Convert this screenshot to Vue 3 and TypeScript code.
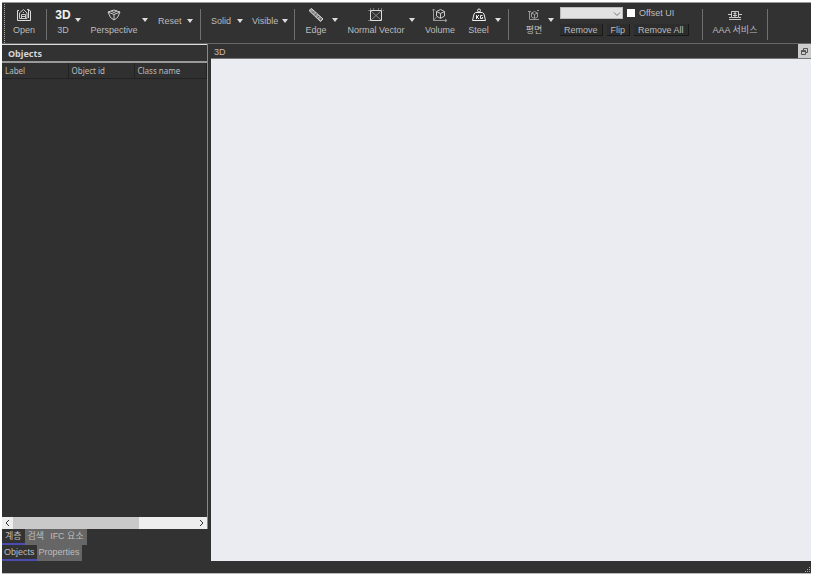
<script setup lang="ts">
import { ref } from 'vue'

const plane = ref('')
const offsetUi = ref(false)
const columns: string[] = ['Label', 'Object id', 'Class name']
const viewTabs: string[] = ['계층', '검색', 'IFC 요소']
const panelTabs: string[] = ['Objects', 'Properties']
const activeView = ref('계층')
const activePanel = ref('Objects')
</script>

<template>
  <div class="page">
    <div class="window">
      <header class="toolbar">
        <span class="grip"></span>
        <div class="group first">
          <button class="tool open">
            <svg width="16" height="14" viewBox="0 0 16 14" fill="none" stroke="#ddd">
              <path d="M3 2.500H1.500V12.500H14.500V10" />
              <path d="M3.500 10.500V5L7.500 1.500L11 5V10.500ZM5.500 10V6.500H9.500V10M5.500 8.500H9.500M7.500 4V5" stroke="#c8c8c8" />
              <path d="M11 1.500H12.500V10M12.500 1.500L14.500 3V10.500" />
            </svg>
            <span>Open</span>
          </button>
        </div>
        <div class="group">
          <button class="tool three"><b class="big">3D</b><span>3D</span></button>
          <button class="drop" aria-label="3D options"><i class="arrow"></i></button>
          <button class="tool perspective">
            <svg width="14" height="14" viewBox="0 0 14 14" fill="none" stroke="#ccc">
              <path d="M1 4L7 2L13 4L10.500 9.500L7 12L3.500 9.500ZM1 4L7 6.500L13 4M7 6.500V12M4 3L7 4.500L10 3" />
            </svg>
            <span>Perspective</span>
          </button>
          <button class="drop after-wide" aria-label="Perspective options"><i class="arrow"></i></button>
          <button class="plain reset">Reset <i class="arrow"></i></button>
        </div>
        <div class="group">
          <button class="plain solid">Solid <i class="arrow"></i></button>
          <button class="plain visible">Visible <i class="arrow"></i></button>
        </div>
        <div class="group">
          <button class="tool edge">
            <svg width="16" height="14" viewBox="0 0 16 14" fill="none">
              <path d="M1 2.500L3.500 0.500L15 11L12.500 13.500Z" fill="#999" stroke="#ddd" />
              <path d="M4.500 5L6 3.500M7 7.500L8.500 5.500M9.500 9.500L11 8M12 12L13.500 10" stroke="#555" />
            </svg>
            <span>Edge</span>
          </button>
          <button class="drop" aria-label="Edge options"><i class="arrow"></i></button>
          <button class="tool normal">
            <svg width="16" height="14" viewBox="0 0 16 14" fill="none">
              <path d="M3 3L13 12M13 3L3 12" stroke="#888" />
              <path d="M0 2.500H3M0 12.500H3M2.500 0V2M13.500 0V2M5.500 0V2M10.500 0V2M15 2.500H16" stroke="#777" />
              <path d="M2.500 2.500H13.500V12.500H2.500Z" stroke="#ddd" />
            </svg>
            <span>Normal Vector</span>
          </button>
          <button class="drop" aria-label="Normal vector options"><i class="arrow"></i></button>
          <button class="tool volume">
            <svg width="16" height="14" viewBox="0 0 16 14" fill="none" stroke="#ccc">
              <path d="M4.500 3.500L8.500 1.500L12.500 3.500V8L8.500 10.500L4.500 8ZM4.500 3.500L8.500 5.500L12.500 3.500M8.500 5.500V10" />
              <path d="M1.500 1V12.500H15M0 2.500L1.500 1L3 2.500M13 11L15 12.500L13 14M1.500 12.500L4.500 9" stroke="#999" />
            </svg>
            <span>Volume</span>
          </button>
          <button class="tool steel">
            <svg width="16" height="14" viewBox="0 0 16 14" fill="none" stroke="#eee">
              <circle cx="8" cy="2.500" r="1.500" />
              <path d="M4.500 4.500H11.500L13 6L14.500 12.500H1.500L3 6Z" />
              <path d="M5.500 7V11M8 7L6 9L8 11M11.500 7.500H9.500V10.500H11.500V9" />
            </svg>
            <span>Steel</span>
          </button>
          <button class="drop" aria-label="Steel options"><i class="arrow"></i></button>
        </div>
        <div class="group">
          <button class="tool plane">
            <svg width="12" height="14" viewBox="0 0 12 14" fill="none" stroke="#999">
              <path d="M3.500 5L6.500 3.500L9.500 5V9L6.500 10.500L3.500 9ZM3.500 5L6.500 6.500L9.500 5M6.500 6.500V10M1.500 3V11.500H11M0 3.500H3M9 2.500H11" />
            </svg>
            <span>평면</span>
          </button>
          <button class="drop" aria-label="평면 options"><i class="arrow"></i></button>
          <div class="clip">
            <div class="clip-row">
              <span class="combo">
                <select v-model="plane" aria-label="평면"><option value=""></option></select>
                <svg width="8" height="6" viewBox="0 0 8 6" fill="none" stroke="#777"><path d="M1 1.500L4 4.500L7 1.500" /></svg>
              </span>
              <label><input v-model="offsetUi" type="checkbox" />Offset UI</label>
            </div>
            <div class="clip-row actions">
              <button>Remove</button><button>Flip</button><button>Remove All</button>
            </div>
          </div>
        </div>
        <div class="group">
          <button class="tool service">
            <svg width="14" height="14" viewBox="0 0 14 14" fill="none" stroke="#ccc">
              <path d="M3.500 3.500H10.500V9.500H3.500ZM1 11.500H13M1 9.500H3M11 9.500H13M0 6.500H3M11 6.500H14M5.500 5.500H8.500M7 4V9M5 7.500H9" />
            </svg>
            <span>AAA 서비스</span>
          </button>
        </div>
      </header>

      <main class="body">
        <aside class="side">
          <div class="panel">
            <h2>Objects</h2>
            <div class="list">
              <table>
                <thead><tr><th v-for="c in columns" :key="c">{{ c }}</th></tr></thead>
              </table>
            </div>
            <div class="scroll">
              <button aria-label="Scroll left"><svg width="5" height="8" viewBox="0 0 5 8"><path d="M4 1L1 4L4 7" /></svg></button>
              <div class="track"><div class="thumb"></div></div>
              <button aria-label="Scroll right"><svg width="5" height="8" viewBox="0 0 5 8"><path d="M1 1L4 4L1 7" /></svg></button>
            </div>
          </div>
          <nav class="tabs">
            <button v-for="t in viewTabs" :key="t" :class="{ active: t === activeView }" @click="activeView = t">{{ t }}</button>
          </nav>
          <nav class="tabs">
            <button v-for="t in panelTabs" :key="t" :class="{ active: t === activePanel }" @click="activePanel = t">{{ t }}</button>
          </nav>
        </aside>
        <section class="view">
          <div class="view-title">
            <span>3D</span>
            <button aria-label="Restore">
              <svg width="7" height="7" viewBox="0 0 7 7" fill="none" stroke="#555"><path d="M2.500 2V.5H6.500V4.500H5M.5 2.500H4.500V6.500H.5ZM.5 3.500H4.500" /></svg>
            </button>
          </div>
          <div class="canvas"></div>
        </section>
      </main>
      <footer class="status">
        <svg width="6" height="6" viewBox="0 0 6 6" fill="#aaa"><path d="M4 0h1v1h-1zM2 2h1v1h-1zM4 2h1v1h-1zM0 4h1v1h-1zM2 4h1v1h-1zM4 4h1v1h-1z" /></svg>
      </footer>
    </div>
  </div>
</template>

<style>
body { background: #fff; }
</style>

<style scoped>
* { box-sizing: border-box; }
.page {
  display: flex;
  height: 100vh;
  padding: 2px 7px 4px 2px;
  font: 9px/12px "Liberation Sans", "Noto Sans CJK KR", sans-serif;
  color: #bcbcbc;
}
.window {
  flex: 1;
  min-width: 0;
  display: flex;
  flex-direction: column;
  background: #323232;
  border-top: 1px solid #999;
  border-bottom: 1px solid #bbb;
}
button {
  margin: 0;
  padding: 0;
  border: 0;
  background: none;
  color: inherit;
  font: inherit;
  white-space: nowrap;
}
.toolbar {
  display: flex;
  height: 41px;
  flex: none;
  border-bottom: 1px solid #666;
}
.grip { width: 3px; margin-top: 1px; border-right: 1px dotted #aaa; }
.group {
  display: flex;
  height: 31px;
  margin-top: 6px;
  border-right: 1px solid #707070;
}
.first { width: 42px; padding-left: 1px; }
.tool {
  display: flex;
  flex-direction: column;
  align-items: center;
  height: 31px;
  margin-top: -1px;
}
.tool svg, .big { height: 14px; flex: none; }
.tool span { margin-top: 2px; }
.big { font-size: 12px; line-height: 14px; color: #f2f2f2; }
.open { width: 36px; }
.three { width: 24px; margin-left: 4px; }
.drop { width: 6px; height: 22px; display: flex; justify-content: center; align-items: center; }
.arrow {
  display: inline-block;
  border: 3px solid transparent;
  border-top: 4px solid #ddd;
  border-bottom: 0;
}
.perspective { width: 56px; margin-left: 5px; }
.after-wide { margin-right: 10px; }
.plain {
  display: flex;
  align-items: center;
  justify-content: space-between;
  height: 24px;
}
.reset { width: 35px; margin-right: 7px; }
.solid { width: 32px; margin: 0 9px 0 10px; }
.visible { width: 36px; margin-right: 6px; }
.edge { width: 32px; margin-left: 5px; }
.normal { width: 66px; margin-left: 5px; }
.volume { width: 44px; margin-left: 3px; }
.steel { width: 33px; }
.steel + .drop { margin-right: 7px; }
.plane { width: 28px; margin-left: 11px; }
.plane + .drop { margin-right: 6px; }
.clip { width: 142px; margin-top: -2px; }
.clip-row { display: flex; height: 12px; gap: 4px; }
.combo { position: relative; width: 63px; height: 12px; }
.combo select {
  display: block;
  width: 100%;
  height: 12px;
  padding: 0;
  border: 1px solid #bbb;
  border-radius: 0;
  background: #e2e2e2;
  appearance: none;
}
.combo svg { position: absolute; right: 2px; top: 4px; pointer-events: none; }
label { display: flex; align-items: center; gap: 4px; }
input { appearance: none; width: 8px; height: 8px; margin: 0; background: #fff; }
input:checked { background: #4848c0; }
.actions { margin-top: 5px; }
.actions button {
  padding: 0 4px;
  border-right: 1px solid #191919;
  border-bottom: 1px solid #191919;
  background: #2d2d2d;
}
.service { width: 64px; }
.body { flex: 1; min-height: 0; display: flex; }
.side {
  display: flex;
  flex-direction: column;
  flex: none;
  width: 206px;
}
.panel { flex: 1; display: flex; flex-direction: column; border-right: 1px solid #888; }
h2 {
  height: 19px;
  margin: 0;
  padding-left: 6px;
  border-top: 1px solid #ddd;
  border-bottom: 2px solid #999;
  font: bold 9px/17px "Noto Sans", sans-serif;
  color: #d4d4d4;
}
.list { flex: 1; background: #303030; }
table { width: 100%; table-layout: fixed; border-collapse: collapse; font: 8px/13px "Noto Sans", sans-serif; }
th {
  height: 15px;
  padding: 0 3px;
  border-right: 1px solid #222;
  border-bottom: 1px solid #222;
  text-align: left;
  font-weight: 400;
}
th:nth-child(1), th:nth-child(2) { width: 66px; }
.scroll { display: flex; height: 12px; background: #eee; }
.scroll button { width: 11px; display: flex; align-items: center; justify-content: center; }
.scroll path { fill: none; stroke: #333; }
.track { flex: 1; }
.thumb { width: 69%; height: 100%; background: #c9c9c9; }
.tabs { display: flex; height: 16px; }
.tabs button { padding: 0 2px; background: #666; border-bottom: 2px solid #666; }
.tabs:first-of-type button { padding: 0 3px; }
.tabs .active { background: #323232; border-bottom-color: #4b4bb0; }
.view { flex: 1; min-width: 0; display: flex; flex-direction: column; padding-left: 3px; }
.view-title {
  display: flex;
  justify-content: space-between;
  height: 15px;
  padding-left: 3px;
  line-height: 16px;
  border-bottom: 1px solid #777;
  color: #d0b8a8;
}
.view-title button { display: flex; align-items: center; justify-content: center; width: 13px; background: #ccc; }
.canvas { flex: 1; background: #ebecf1; }
.status { display: flex; flex: none; justify-content: flex-end; align-items: flex-end; height: 12px; }
</style>
